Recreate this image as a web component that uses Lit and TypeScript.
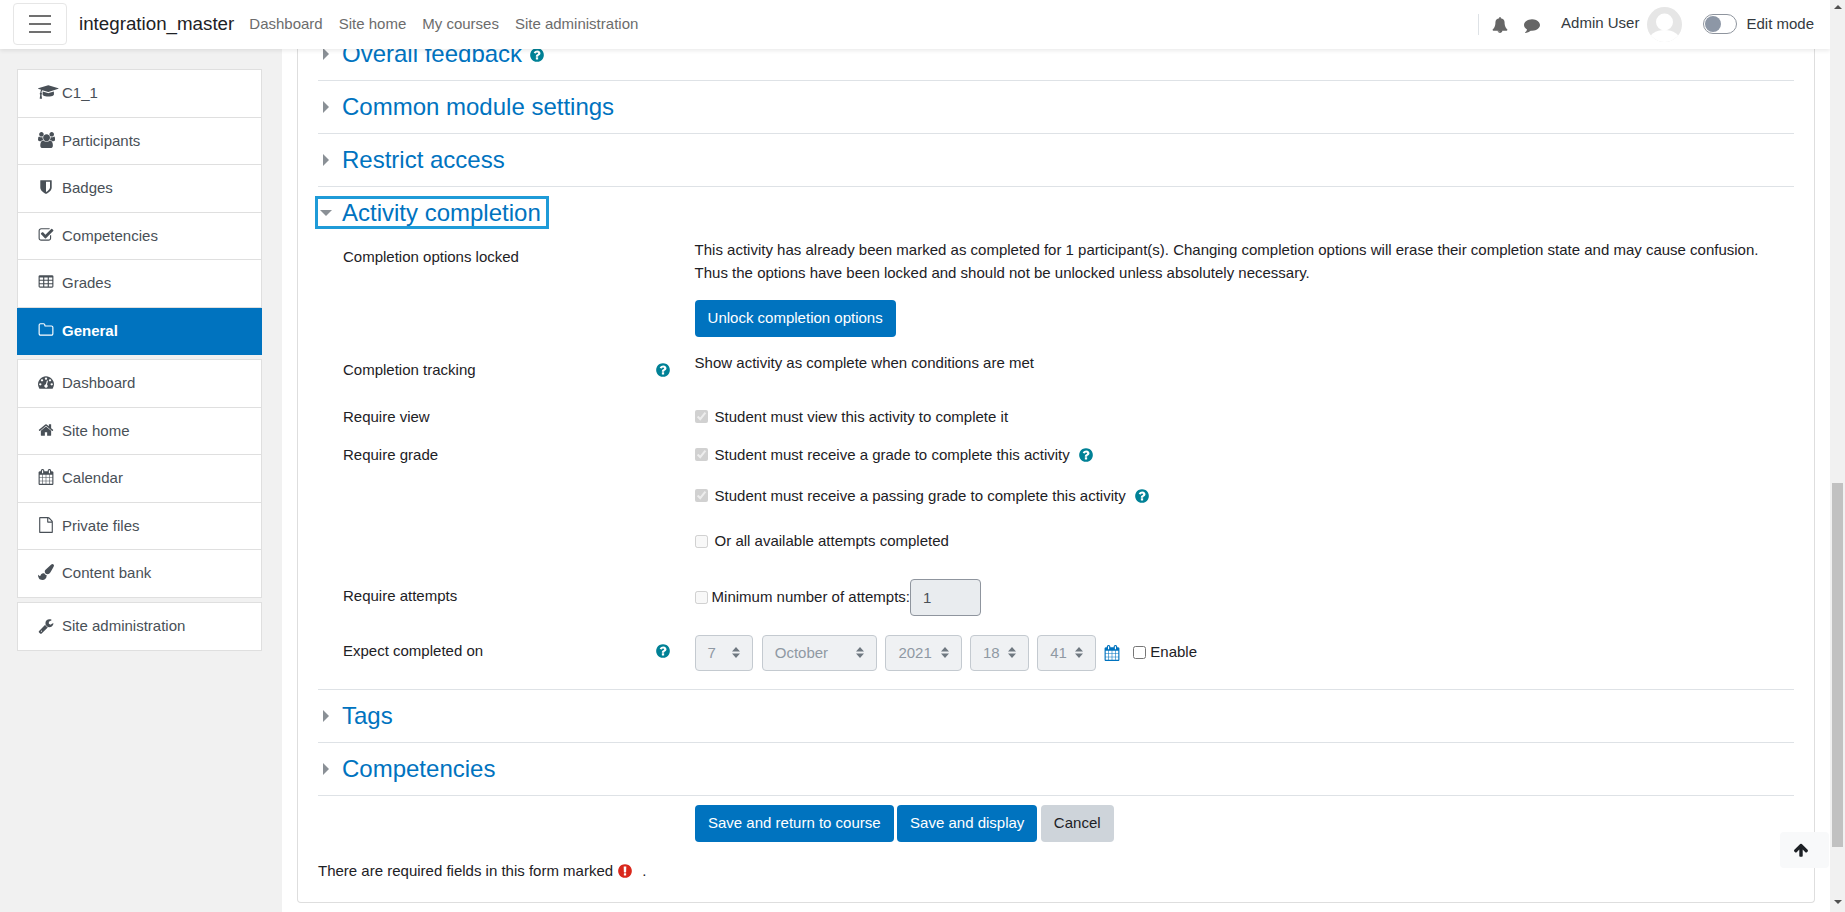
import { LitElement, html, css } from "lit";
import { customElement } from "lit/decorators.js";

const P: Record<string, [number, string]> = {
  bell: [1792, "M912 1696q0-16-16-16-59 0-101.5-42.5t-42.5-101.5q0-16-16-16t-16 16q0 73 51.5 124.5t124.5 51.5q16 0 16-16zm816-288q0 52-38 90t-90 38h-448q0 106-75 181t-181 75-181-75-75-181h-448q-52 0-90-38t-38-90q50-42 91-88t85-119.5 74.5-158.5 50-206 19.5-260q0-152 117-282.5t307-158.5q-8-19-8-39 0-40 28-68t68-28 68 28 28 68q0 20-8 39 190 28 307 158.5t117 282.5q0 139 19.5 260t50 206 74.5 158.5 85 119.5 91 88z"],
  comment: [1792, "M1792 896q0 174-120 321.5t-326 233-450 85.5q-70 0-145-8-198 175-460 242-49 14-114 22-17 2-30.5-9t-17.5-29v-1q-3-4-.5-12t2-10 4.5-9.5l6-9 7-8.5 8-9q7-8 31-34.5t34.5-38 31-39.5 32.5-51 27-59 26-76q-157-89-247.5-220t-90.5-281q0-130 71-248.5t191-204.5 286-136.5 348-50.5q244 0 450 85.5t326 233 120 321.5z"],
  help: [1792, "M1024 1376v-192q0-14-9-23t-23-9h-192q-14 0-23 9t-9 23v192q0 14 9 23t23 9h192q14 0 23-9t9-23zm256-672q0-88-55.5-163t-138.5-116-170-41q-243 0-371 213-15 24 8 42l132 100q7 6 19 6 16 0 25-12 53-68 86-92 34-24 86-24 48 0 85.5 26t37.5 59q0 38-20 61t-68 45q-63 28-115.5 86.5t-52.5 125.5v36q0 14 9 23t23 9h192q14 0 23-9t9-23q0-19 21.5-49.5t54.5-49.5q32-18 49-28.5t46-35 44.5-48 28-60.5 12.5-81zm384 192q0 209-103 385.5t-279.5 279.5-385.5 103-385.5-103-279.5-279.5-103-385.5 103-385.5 279.5-279.5 385.5-103 385.5 103 279.5 279.5 103 385.5z"],
  exclaim: [1792, "M896 128q209 0 385.5 103t279.5 279.5 103 385.5-103 385.5-279.5 279.5-385.5 103-385.5-103-279.5-279.5-103-385.5 103-385.5 279.5-279.5 385.5-103zm128 1247v-190q0-14-9-23.5t-22-9.5h-192q-13 0-23 10t-10 23v190q0 13 10 23t23 10h192q13 0 22-9.5t9-23.5zm-2-344l18-621q0-12-10-18-10-8-24-8h-220q-14 0-24 8-10 6-10 18l17 621q0 10 10 17.5t24 7.5h185q14 0 23.5-7.5t10.5-17.5z"],
  up: [1792, "M1675 971q0 51-37 90l-75 75q-38 38-91 38-54 0-90-38l-294-293v704q0 52-37.5 84.5t-90.5 32.5h-128q-53 0-90.5-32.5t-37.5-84.5v-704l-294 293q-36 38-90 38t-90-38l-75-75q-38-38-38-90 0-53 38-91l651-651q35-37 90-37 54 0 91 37l651 651q37 39 37 91z"],
  cap: [2304, "M1774 836l18 316q4 69-82 128t-235 93.5-323 34.5-323-34.5-235-93.5-82-128l18-316 574 181q22 7 48 7t48-7zm530-324q0 23-22 31l-1120 352q-4 1-10 1t-10-1l-652-206q-43 34-71 111.5t-34 178.5q63 36 63 109 0 69-58 107l58 433q2 14-8 25-9 11-24 11h-192q-15 0-24-11-10-11-8-25l58-433q-58-38-58-107 0-73 65-111 11-207 98-330l-333-104q-22-8-22-31t22-31l1120-352q4-1 10-1t10 1l1120 352q22 8 22 31z"],
  users: [1920, "M593 896q-162 5-265 128h-134q-82 0-138-40.5t-56-118.5q0-353 124-353 6 0 43.5 21t97.5 42.5 119 21.5q67 0 133-23-5 37-5 66 0 139 81 256zm1071 637q0 120-73 189.5t-194 69.5h-874q-121 0-194-69.5t-73-189.5q0-53 3.5-103.5t14-109 26.5-108.5 43-97.5 62-81 85.5-53.5 111.5-20q10 0 43 21.5t73 48 107 48 135 21.5 135-21.5 107-48 73-48 43-21.5q61 0 111.5 20t85.5 53.5 62 81 43 97.5 26.5 108.5 14 109 3.5 103.5zm-1024-1277q0 106-75 181t-181 75-181-75-75-181 75-181 181-75 181 75 75 181zm704 384q0 159-112.5 271.5t-271.5 112.5-271.5-112.5-112.5-271.5 112.5-271.5 271.5-112.5 271.5 112.5 112.5 271.5zm576 225q0 78-56 118.5t-138 40.5h-134q-103-123-265-128 81-117 81-256 0-29-5-66 66 23 133 23 59 0 119-21.5t97.5-42.5 43.5-21q124 0 124 353zm-128-609q0 106-75 181t-181 75-181-75-75-181 75-181 181-75 181 75 75 181z"],
  shield: [1792, "M1344 960v-640h-448v1137q119-63 213-137 235-184 235-360zm192-768v768q0 86-33.5 170.5t-83 150-118 127.5-126.5 103-121 77.5-89.5 49.5-42.5 20q-12 6-26 6t-26-6q-16-7-42.5-20t-89.5-49.5-121-77.5-126.5-103-118-127.5-83-150-33.5-170.5v-768q0-26 19-45t45-19h1152q26 0 45 19t19 45z"],
  check: [1792, "M1472 930v318q0 119-84.5 203.5t-203.5 84.5h-832q-119 0-203.5-84.5t-84.5-203.5v-832q0-119 84.5-203.5t203.5-84.5h832q63 0 117 25 15 7 18 23 3 17-9 29l-49 49q-10 10-23 10-3 0-9-2-23-6-45-6h-832q-66 0-113 47t-47 113v832q0 66 47 113t113 47h832q66 0 113-47t47-113v-254q0-13 9-22l64-64q10-10 23-10 6 0 12 3 20 8 20 29zm231-489l-814 814q-24 24-57 24t-57-24l-430-430q-24-24-24-57t24-57l110-110q24-24 57-24t57 24l263 263 647-647q24-24 57-24t57 24l110 110q24 24 24 57t-24 57z"],
  table: [1792, "M576 1376v-192q0-14-9-23t-23-9h-320q-14 0-23 9t-9 23v192q0 14 9 23t23 9h320q14 0 23-9t9-23zm0-384v-192q0-14-9-23t-23-9h-320q-14 0-23 9t-9 23v192q0 14 9 23t23 9h320q14 0 23-9t9-23zm512 384v-192q0-14-9-23t-23-9h-320q-14 0-23 9t-9 23v192q0 14 9 23t23 9h320q14 0 23-9t9-23zm-512-768v-192q0-14-9-23t-23-9h-320q-14 0-23 9t-9 23v192q0 14 9 23t23 9h320q14 0 23-9t9-23zm512 384v-192q0-14-9-23t-23-9h-320q-14 0-23 9t-9 23v192q0 14 9 23t23 9h320q14 0 23-9t9-23zm512 384v-192q0-14-9-23t-23-9h-320q-14 0-23 9t-9 23v192q0 14 9 23t23 9h320q14 0 23-9t9-23zm-512-768v-192q0-14-9-23t-23-9h-320q-14 0-23 9t-9 23v192q0 14 9 23t23 9h320q14 0 23-9t9-23zm512 384v-192q0-14-9-23t-23-9h-320q-14 0-23 9t-9 23v192q0 14 9 23t23 9h320q14 0 23-9t9-23zm0-384v-192q0-14-9-23t-23-9h-320q-14 0-23 9t-9 23v192q0 14 9 23t23 9h320q14 0 23-9t9-23zm128-320v1088q0 66-47 113t-113 47h-1344q-66 0-113-47t-47-113v-1088q0-66 47-113t113-47h1344q66 0 113 47t47 113z"],
  folder: [1792, "M1600 1312v-704q0-40-28-68t-68-28h-704q-40 0-68-28t-28-68v-64q0-40-28-68t-68-28h-320q-40 0-68 28t-28 68v960q0 40 28 68t68 28h1216q40 0 68-28t28-68zm128-704v704q0 92-66 158t-158 66h-1216q-92 0-158-66t-66-158v-960q0-92 66-158t158-66h320q92 0 158 66t66 158v32h672q92 0 158 66t66 158z"],
  gauge: [1792, "M384 1152q0-53-37.5-90.5t-90.5-37.5-90.5 37.5-37.5 90.5 37.5 90.5 90.5 37.5 90.5-37.5 37.5-90.5zm192-448q0-53-37.5-90.5t-90.5-37.5-90.5 37.5-37.5 90.5 37.5 90.5 90.5 37.5 90.5-37.5 37.5-90.5zm428 481l101-382q6-26-7.5-48.5t-38.5-29.5-48 6.5-30 39.5l-101 382q-60 5-107 43.5t-63 98.5q-20 77 20 146t117 89 146-20 89-117q16-60-6-117t-72-91zm660-33q0-53-37.5-90.5t-90.5-37.5-90.5 37.5-37.5 90.5 37.5 90.5 90.5 37.5 90.5-37.5 37.5-90.5zm-640-640q0-53-37.5-90.5t-90.5-37.5-90.5 37.5-37.5 90.5 37.5 90.5 90.5 37.5 90.5-37.5 37.5-90.5zm448 192q0-53-37.5-90.5t-90.5-37.5-90.5 37.5-37.5 90.5 37.5 90.5 90.5 37.5 90.5-37.5 37.5-90.5zm320 448q0 261-141 483-19 29-54 29h-1402q-35 0-54-29-141-221-141-483 0-182 71-348t191-286 286-191 348-71 348 71 286 191 191 286 71 348z"],
  home: [1792, "M1472 992v480q0 26-19 45t-45 19h-384v-384h-256v384h-384q-26 0-45-19t-19-45v-480q0-1 .5-3t.5-3l575-474 575 474q1 2 1 6zm223-69l-62 74q-8 9-21 11h-3q-13 0-21-7l-692-577-692 577q-12 8-24 7-13-2-21-11l-62-74q-8-10-7-23.5t11-21.5l719-599q32-26 76-26t76 26l244 204v-195q0-14 9-23t23-9h192q14 0 23 9t9 23v408l219 182q10 8 11 21.5t-7 23.5z"],
  calendar: [1792, "M192 1664h288v-288h-288v288zm352 0h320v-288h-320v288zm-352-352h288v-320h-288v320zm352 0h320v-320h-320v320zm-352-384h288v-288h-288v288zm736 736h320v-288h-320v288zm-384-736h320v-288h-320v288zm768 736h288v-288h-288v288zm-384-352h320v-320h-320v320zm-352-864v-288q0-13-9.5-22.5t-22.5-9.5h-64q-13 0-22.5 9.5t-9.5 22.5v288q0 13 9.5 22.5t22.5 9.5h64q13 0 22.5-9.5t9.5-22.5zm736 864h288v-320h-288v320zm-384-384h320v-288h-320v288zm384 0h288v-288h-288v288zm32-480v-288q0-13-9.5-22.5t-22.5-9.5h-64q-13 0-22.5 9.5t-9.5 22.5v288q0 13 9.5 22.5t22.5 9.5h64q13 0 22.5-9.5t9.5-22.5zm384-64v1280q0 52-38 90t-90 38h-1408q-52 0-90-38t-38-90v-1280q0-52 38-90t90-38h128v-96q0-66 47-113t113-47h64q66 0 113 47t47 113v96h384v-96q0-66 47-113t113-47h64q66 0 113 47t47 113v96h128q52 0 90 38t38 90z"],
  file: [1792, "M1596 380q28 28 48 76t20 88v1152q0 40-28 68t-68 28h-1344q-40 0-68-28t-28-68v-1600q0-40 28-68t68-28h896q40 0 88 20t76 48zm-444-244v376h376q-10-29-22-41l-313-313q-12-12-41-22zm384 1528v-1024h-416q-40 0-68-28t-28-68v-416h-768v1536h1280z"],
  brush: [1792, "M1615 0q70 0 122.5 46.5t52.5 116.5q0 63-45 151-332 629-465 752-97 91-218 91-126 0-216.5-92.5t-90.5-219.5q0-128 92-212l638-579q59-54 130-54zm-909 1034q39 76 106.5 130t150.5 76l1 71q4 213-129.5 347t-348.5 134q-123 0-218-46.5t-152.5-127.5-86.5-183-29-220q7 5 41 30t62 44.5 59 36.5 46 17q41 0 55-37 25-66 57.5-112.5t69.5-76 88-47.5 103-25.5 125-10.5z"],
  wrench: [1792, "M448 1472q0-26-19-45t-45-19-45 19-19 45 19 45 45 19 45-19 19-45zm644-420l-682 682q-37 37-90 37-52 0-91-37l-106-108q-38-36-38-90 0-53 38-91l681-681q39 98 114.5 173.5t173.5 114.5zm634-435q0 39-23 106-47 134-164.5 217.5t-258.5 83.5q-185 0-316.5-131.5t-131.5-316.5 131.5-316.5 316.5-131.5q58 0 121.5 16.5t107.5 46.5q16 11 16 28t-16 28l-293 169v224l193 111q5-3 79-48.5t135.5-81 70.5-35.5q15 0 23.5 10t8.5 25z"],
};

const icon = (name: string, cls = "") => {
  const [w, d] = P[name];
  return html`<svg class="fa ${cls}" width=${(16 * w) / 1792} height="16" viewBox="0 0 ${w} 1792" fill="currentColor"><path d=${d}></path></svg>`;
};

const help = () => icon("help", "help");

@customElement("app-root")
export class AppRoot extends LitElement {
  static styles = css`
    :host { display: block; height: 100vh; overflow: hidden; font-family: "Liberation Sans", Arial, sans-serif; font-size: 15px; line-height: 22.5px; color: #1d2125; background: #fff; }
    * { box-sizing: border-box; }
    .shell { display: flex; height: 912px; }
    .page { position: relative; flex: 1; min-width: 0; display: flex; overflow: hidden; }
    .fa { flex: none; display: block; }
    .help { color: #008196; }

    .nav { position: absolute; left: 0; top: 0; right: 0; height: 49px; z-index: 5; background: #fff; box-shadow: 0 2px 4px rgba(0,0,0,.08); display: flex; align-items: center; padding-left: 13px; }
    .burger { width: 54px; height: 42px; border: 1px solid #e6e6e6; border-radius: 4px; display: flex; flex-direction: column; align-items: center; justify-content: center; gap: 6px; margin-top: -1px; }
    .burger i { display: block; width: 22px; height: 2px; background: #707070; }
    .brand { font-size: 18.75px; margin-left: 12px; color: #1d2125; margin-right: 15px; }
    .links { display: flex; gap: 16px; color: #6c6c6c; }
    .right { margin-left: auto; display: flex; align-items: center; height: 49px; }
    .vr { width: 1px; height: 21px; background: #dee2e6; margin-right: 13px; }
    .nic { color: #666; }
    .nic + .nic { margin-left: 16px; }
    .user { margin-left: 21px; margin-top: -3px; color: #343a40; }
    .avatar { width: 35px; height: 35px; margin-left: 8px; display: block; }
    .toggle { width: 34px; height: 20px; border: 1px solid #8f959e; border-radius: 10px; margin-left: 21px; margin-top: -1px; padding: 1px; display: flex; }
    .toggle i { display: block; width: 16px; height: 16px; border-radius: 50%; background: #8d97a6; }
    .edit { margin-left: 9px; margin-right: 16px; color: #343a40; }

    .side { width: 282px; flex: none; background: #f1f1f1; padding: 69px 20px 0 17px; display: flex; flex-direction: column; }
    .block { background: #fff; border: 1px solid #dfdfdf; border-bottom: none; margin-bottom: 4px; }
    .block.last { border-bottom: 1px solid #dfdfdf; }
    .item { display: flex; align-items: center; height: 47.5px; padding-left: 20px; border-bottom: 1px solid #dfdfdf; color: #495057; }
    .block > .item:last-child { border-bottom: none; }
    .block > .item:nth-child(5):last-child { height: 46.8px; }
    .item .ib { width: 24px; flex: none; }
    .item .ib svg { margin-top: -2px; }
    .item.on { background: #0073bf; color: #fff; font-weight: 700; margin: 0 -1px; padding-left: 21px; }

    .main { flex: 1; min-width: 0; padding: 0 15px; background: #fff; }
    .card { height: 903px; border: 1px solid #dedede; border-top: none; border-radius: 0 0 4px 4px; padding: 28px 20px 0; }
    .sec { height: 53px; border-bottom: 1px solid #dee2e6; display: flex; align-items: center; }
    .sec.form { height: auto; display: block; }
    .tri { width: 0; height: 0; border-style: solid; border-width: 6px 0 6px 6px; border-color: transparent transparent transparent #8a9096; margin: 0 13px 0 5px; }
    .h { font-size: 24px; line-height: 30px; color: #0073bf; display: flex; align-items: center; gap: 7px; white-space: nowrap; }
    .h .help { margin-top: 1px; }
    .acc { height: 33px; margin: 9px 0 0 -3px; width: 234px; border: 3px solid #1f9bd8; display: flex; align-items: center; white-space: nowrap; }
    .acc b { display: block; width: 0; height: 0; border-style: solid; border-width: 6px 6px 0 6px; border-color: #8a9096 transparent transparent transparent; margin: 1px 10px 0 2px; }

    .row { display: grid; grid-template-columns: 351.6px 1fr; padding-left: 25px; }
    .lab { display: flex; justify-content: space-between; padding-right: 24px; }
    .lab svg { margin-top: 3px; }
    .r1 { margin-top: 10px; }
    .r1 .lab { padding-top: 7px; }
    .r2 { margin-top: 15px; }
    .r2 .lab { padding-top: 7px; }
    .r3 { margin-top: 24px; }
    .r4 { margin-top: 15.5px; }
    .r5 { margin-top: 26.1px; }
    .r5 .lab { padding-top: 6px; }
    .r6 { margin-top: 19px; padding-bottom: 18px; }
    .r6 .lab { padding-top: 5px; }
    .btn { display: inline-block; padding: 7px 13px; height: 37px; border-radius: 4px; background: #0073bf; color: #fff; white-space: nowrap; }
    .btn.sec2 { background: #ced4da; color: #1d2125; }
    .unlock { margin-top: 16px; }
    .chk { display: flex; align-items: center; height: 22.5px; }
    .chk input { margin: 0 7px 0 0; width: 13px; height: 13px; flex: none; }
    .chk svg { margin-left: 8px; }
    .c2 { margin-top: 18.6px; }
    .c3 { margin-top: 22.9px; }
    .attempt { display: flex; align-items: center; height: 37px; }
    .attempt input[type=checkbox] { margin: 0 4px 0 0; width: 13px; height: 13px; }
    .num { width: 71px; height: 37px; border: 1px solid #8f959e; border-radius: 4px; background: #e9ecef; padding: 0 12px; font: inherit; color: #495057; }
    .date { display: flex; align-items: center; height: 36px; }
    .sel { height: 36px; border: 1px solid #c4cad0; border-radius: 4px; background: #eff1f3; color: #8f99a3; display: flex; align-items: center; justify-content: space-between; padding: 1px 12px 0 12px; margin-right: 8.4px; }
    .sel svg { display: block; margin-top: -1px; }
    .w58 { width: 58.75px; }
    .w115 { width: 115.25px; }
    .w76 { width: 76.25px; }
    .cal { color: #0073bf; margin: 0 13px 0 0; }
    .en { display: flex; align-items: center; }
    .en input { margin: 0 4px 0 0; width: 13px; height: 13px; }

    .actions { display: flex; gap: 3.5px; padding: 9px 0 0 377px; }
    .req { margin-top: 18.5px; display: flex; align-items: center; }
    .req svg { color: #d9281c; margin: 0 6px 0 4px; }
    .req span { margin-left: 3px; }

    .top { position: absolute; right: 1px; bottom: 44px; width: 49px; height: 36px; border-radius: 4px; background: #f8f9fa; color: #1d2125; display: flex; align-items: center; justify-content: center; padding-right: 8px; z-index: 4; }

    .bar { width: 15px; flex: none; background: #f1f1f1; display: flex; flex-direction: column; align-items: center; }
    .arr { width: 0; height: 0; border-style: solid; flex: none; }
    .arr.u { border-width: 0 4px 4px 4px; border-color: transparent transparent #505050 transparent; margin-top: 5px; }
    .arr.d { border-width: 4px 4px 0 4px; border-color: #505050 transparent transparent transparent; margin-top: 53px; }
    .thumb { width: 11px; height: 364px; margin-top: 474px; background: #c1c1c1; flex: none; }
  `;

  private item(ic: string, label: string, on = false) {
    return html`<div class="item ${on ? "on" : ""}"><span class="ib">${icon(ic)}</span><span>${label}</span></div>`;
  }

  private section(title: string, withHelp = false) {
    return html`<div class="sec"><span class="tri"></span><span class="h">${title}${withHelp ? help() : ""}</span></div>`;
  }

  private select(value: string, cls: string) {
    return html`<div class="sel ${cls}"><span>${value}</span>
      <svg width="8" height="11" viewBox="0 0 8 11" fill="#6f7880"><path d="M4 0l4 4.500H0zM4 11l4-4.500H0z"></path></svg></div>`;
  }

  render() {
    return html`
      <div class="shell">
        <div class="page">
          <header class="nav">
            <div class="burger"><i></i><i></i><i></i></div>
            <span class="brand">integration_master</span>
            <nav class="links"><span>Dashboard</span><span>Site home</span><span>My courses</span><span>Site administration</span></nav>
            <div class="right">
              <span class="vr"></span>
              <span class="nic">${icon("bell")}</span>
              <span class="nic">${icon("comment")}</span>
              <span class="user">Admin User</span>
              <svg class="avatar" viewBox="0 0 35 35"><defs><clipPath id="av"><circle cx="17.5" cy="17.5" r="17.5"></circle></clipPath></defs>
                <g clip-path="url(#av)"><rect width="35" height="35" fill="#e6e6e6"></rect><circle cx="17.5" cy="15" r="8.5" fill="#fff"></circle><ellipse cx="17.5" cy="34" rx="16" ry="11" fill="#fff"></ellipse></g></svg>
              <div class="toggle"><i></i></div>
              <span class="edit">Edit mode</span>
            </div>
          </header>

          <aside class="side">
            <div class="block">
              ${this.item("cap", "C1_1")}${this.item("users", "Participants")}${this.item("shield", "Badges")}
              ${this.item("check", "Competencies")}${this.item("table", "Grades")}${this.item("folder", "General", true)}
            </div>
            <div class="block last">
              ${this.item("gauge", "Dashboard")}${this.item("home", "Site home")}${this.item("calendar", "Calendar")}
              ${this.item("file", "Private files")}${this.item("brush", "Content bank")}
            </div>
            <div class="block last">${this.item("wrench", "Site administration")}</div>
          </aside>

          <main class="main">
            <div class="card">
              ${this.section("Overall feedback", true)}
              ${this.section("Common module settings")}
              ${this.section("Restrict access")}
              <div class="sec form">
                <div class="acc"><b></b><span class="h">Activity completion</span></div>
                <div class="row r1">
                  <div class="lab">Completion options locked</div>
                  <div>
                    <div>This activity has already been marked as completed for 1 participant(s). Changing completion options will erase their completion state and may cause confusion.<br>Thus the options have been locked and should not be unlocked unless absolutely necessary.</div>
                    <span class="btn unlock">Unlock completion options</span>
                  </div>
                </div>
                <div class="row r2">
                  <div class="lab"><span>Completion tracking</span>${help()}</div>
                  <div>Show activity as complete when conditions are met</div>
                </div>
                <div class="row r3">
                  <div class="lab">Require view</div>
                  <label class="chk"><input type="checkbox" checked disabled>Student must view this activity to complete it</label>
                </div>
                <div class="row r4">
                  <div class="lab">Require grade</div>
                  <div>
                    <label class="chk"><input type="checkbox" checked disabled>Student must receive a grade to complete this activity${help()}</label>
                    <label class="chk c2"><input type="checkbox" checked disabled>Student must receive a passing grade to complete this activity${help()}</label>
                    <label class="chk c3"><input type="checkbox" disabled>Or all available attempts completed</label>
                  </div>
                </div>
                <div class="row r5">
                  <div class="lab">Require attempts</div>
                  <label class="attempt"><input type="checkbox" disabled>Minimum number of attempts:<input class="num" type="text" value="1" disabled></label>
                </div>
                <div class="row r6">
                  <div class="lab"><span>Expect completed on</span>${help()}</div>
                  <div class="date">
                    ${this.select("7", "w58")}${this.select("October", "w115")}${this.select("2021", "w76")}${this.select("18", "w58")}${this.select("41", "w58")}
                    <span class="cal">${icon("calendar")}</span>
                    <label class="en"><input type="checkbox">Enable</label>
                  </div>
                </div>
              </div>
              ${this.section("Tags")}
              ${this.section("Competencies")}
              <div class="actions">
                <span class="btn">Save and return to course</span><span class="btn">Save and display</span><span class="btn sec2">Cancel</span>
              </div>
              <div class="req">There are required fields in this form marked${icon("exclaim")}<span>.</span></div>
            </div>
          </main>

          <div class="top">${icon("up")}</div>
        </div>
        <div class="bar"><span class="arr u"></span><span class="thumb"></span><span class="arr d"></span></div>
      </div>
    `;
  }
}
